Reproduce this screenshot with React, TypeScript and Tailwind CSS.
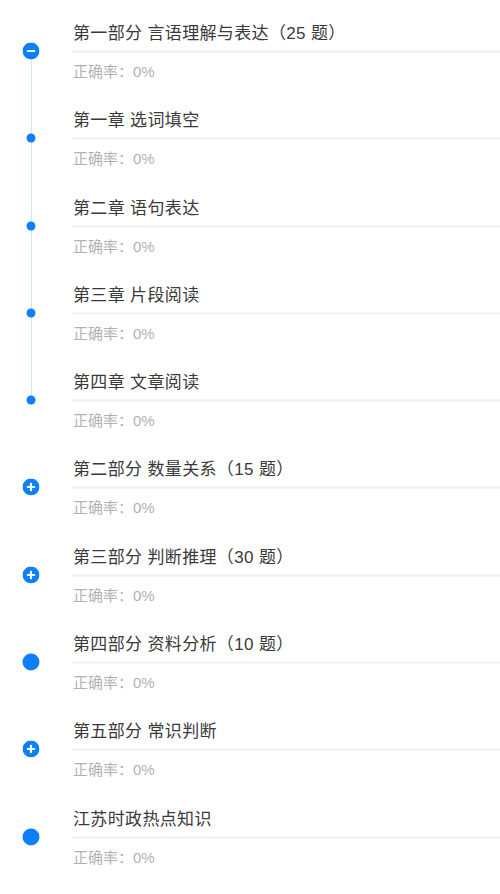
import React from "react";

type Kind = "minus" | "plus" | "dot" | "big";

type Item = {
    title: string;
    kind: Kind;
    line?: "start" | "mid" | "end";
};

const items: Item[] = [
    { title: "第一部分 言语理解与表达（25 题）", kind: "minus", line: "start" },
    { title: "第一章 选词填空", kind: "dot", line: "mid" },
    { title: "第二章 语句表达", kind: "dot", line: "mid" },
    { title: "第三章 片段阅读", kind: "dot", line: "mid" },
    { title: "第四章 文章阅读", kind: "dot", line: "end" },
    { title: "第二部分 数量关系（15 题）", kind: "plus" },
    { title: "第三部分 判断推理（30 题）", kind: "plus" },
    { title: "第四部分 资料分析（10 题）", kind: "big" },
    { title: "第五部分 常识判断", kind: "plus" },
    { title: "江苏时政热点知识", kind: "big" },
];

function Marker({ kind }: { kind: Kind }) {
    if (kind === "dot") {
        return <div className="w-[9px] h-[9px] rounded-full bg-[#0d7ffb]" />;
    }
    if (kind === "big") {
        return <div className="w-[17px] h-[17px] rounded-full bg-[#0d7ffb]" />;
    }
    return (
        <svg width="17" height="17" viewBox="0 0 17 17">
            <circle cx="8.5" cy="8.5" r="8.5" fill="#0d7ffb" />
            <rect x="4.2" y="7.4" width="8.6" height="2.2" rx="1" fill="#fff" />
            {kind === "plus" && <rect x="7.4" y="4.2" width="2.2" height="8.6" rx="1" fill="#fff" />}
        </svg>
    );
}

function Row({ item }: { item: Item }) {
    return (
        <div className="flex h-[87.3px]">
            <div className="relative w-[72px] shrink-0">
                {(item.line === "start" || item.line === "mid") && (
                    <div className="absolute left-[30.5px] top-[30px] bottom-0 w-px bg-[#cfe5fd]" />
                )}
                {(item.line === "mid" || item.line === "end") && (
                    <div className="absolute left-[30.5px] top-0 h-[30px] w-px bg-[#cfe5fd]" />
                )}
                <div className="absolute left-[31px] top-[30px] -translate-x-1/2 -translate-y-1/2 flex">
                    <Marker kind={item.kind} />
                </div>
            </div>
            <div className="flex-1 flex flex-col">
                <div className="pl-[1px] pt-[1px] text-[17px] leading-[24px] tracking-[0.35px] text-[#3a3a3a] whitespace-nowrap">
                    {item.title}
                </div>
                <div className="mt-[4px] h-[3px] bg-[#f4f4f4]" />
                <div className="mt-[9px] pl-[1px] text-[15px] leading-[20px] text-[#b2b2b2]">
                    正确率：0%
                </div>
            </div>
        </div>
    );
}

export default function App() {
    return (
        <div className="w-[500px] h-[894px] overflow-hidden bg-white pt-[21px] font-['Liberation_Sans','Noto_Sans_CJK_SC',sans-serif]">
            {items.map((item, i) => (
                <Row key={i} item={item} />
            ))}
        </div>
    );
}
